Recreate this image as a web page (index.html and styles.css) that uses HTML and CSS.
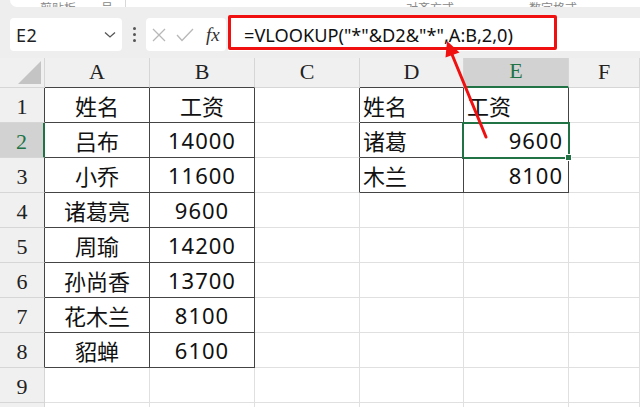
FILE: index.html
```html
<!DOCTYPE html>
<html lang="zh">
<head>
<meta charset="utf-8">
<link rel="stylesheet" href="styles.css">
</head>
<body>
<div class="page">
  <div class="ribbon">
    <span class="rt rt1">剪贴板</span>
    <span class="rt rt2">号</span>
    <span class="rdiv"></span>
    <span class="rt rt3">对齐方式</span>
    <span class="rt rt4">数字格式</span>
  </div>
  <div class="fbar">
    <div class="namebox">
      <span class="ref">E2</span>
      <svg class="chev" width="12" height="8" viewBox="0 0 12 8"><path d="M1 1.5 L6 6 L11 1.5" fill="none" stroke="#555" stroke-width="1.3"/></svg>
    </div>
    <div class="dots"><i></i><i></i><i></i></div>
    <div class="fbtns">
      <svg width="14" height="14" viewBox="0 0 14 14"><path d="M1 1 L13 13 M13 1 L1 13" stroke="#b8b8b8" stroke-width="1.3" fill="none"/></svg>
      <svg width="18" height="14" viewBox="0 0 18 14"><path d="M1 7 L6 12.5 L17 1" stroke="#b8b8b8" stroke-width="1.3" fill="none"/></svg>
      <span class="fx">fx</span>
    </div>
    <div class="finput">=VLOOKUP("*"&amp;D2&amp;"*",A:B,2,0)</div>
  </div>
  <div class="grid">
    <div class="c hd corner"><span class="tri"></span></div>
    <div class="c hd ch dkb">A</div>
    <div class="c hd ch dkb">B</div>
    <div class="c hd ch">C</div>
    <div class="c hd ch dkb">D</div>
    <div class="c hd ch act">E</div>
    <div class="c hd ch">F</div>

    <div class="c hd rh dkr">1</div>
    <div class="c t ctr">姓名</div>
    <div class="c t ctr">工资</div>
    <div class="c dkr"></div>
    <div class="c t lft">姓名</div>
    <div class="c t lft">工资</div>
    <div class="c"></div>

    <div class="c hd rh actr">2</div>
    <div class="c t ctr">吕布</div>
    <div class="c t ctr num">14000</div>
    <div class="c dkr"></div>
    <div class="c t lft">诸葛</div>
    <div class="c t rgt num sel">9600<span class="handle"></span></div>
    <div class="c"></div>

    <div class="c hd rh dkr">3</div>
    <div class="c t ctr">小乔</div>
    <div class="c t ctr num">11600</div>
    <div class="c dkr"></div>
    <div class="c t lft">木兰</div>
    <div class="c t rgt num">8100</div>
    <div class="c"></div>

    <div class="c hd rh dkr">4</div>
    <div class="c t ctr">诸葛亮</div>
    <div class="c t ctr num">9600</div>
    <div class="c"></div>
    <div class="c"></div>
    <div class="c"></div>
    <div class="c"></div>

    <div class="c hd rh dkr">5</div>
    <div class="c t ctr">周瑜</div>
    <div class="c t ctr num">14200</div>
    <div class="c"></div>
    <div class="c"></div>
    <div class="c"></div>
    <div class="c"></div>

    <div class="c hd rh dkr">6</div>
    <div class="c t ctr">孙尚香</div>
    <div class="c t ctr num">13700</div>
    <div class="c"></div>
    <div class="c"></div>
    <div class="c"></div>
    <div class="c"></div>

    <div class="c hd rh dkr">7</div>
    <div class="c t ctr">花木兰</div>
    <div class="c t ctr num">8100</div>
    <div class="c"></div>
    <div class="c"></div>
    <div class="c"></div>
    <div class="c"></div>

    <div class="c hd rh dkr">8</div>
    <div class="c t ctr">貂蝉</div>
    <div class="c t ctr num">6100</div>
    <div class="c"></div>
    <div class="c"></div>
    <div class="c"></div>
    <div class="c"></div>

    <div class="c hd rh">9</div>
    <div class="c"></div>
    <div class="c"></div>
    <div class="c"></div>
    <div class="c"></div>
    <div class="c"></div>
    <div class="c"></div>

    <div class="c hd rh">10</div>
    <div class="c"></div>
    <div class="c"></div>
    <div class="c"></div>
    <div class="c"></div>
    <div class="c"></div>
    <div class="c"></div>
  </div>

  <div class="redbox"></div>
  <svg class="arrow" width="640" height="407" viewBox="0 0 640 407">
    <line x1="486" y1="137" x2="451" y2="52" stroke="#f01010" stroke-width="3" stroke-linecap="round"/>
    <polygon points="447,41 459.5,52.5 445.5,57.5" fill="#f01010"/>
  </svg>
</div>
</body>
</html>
```
FILE: styles.css
```css
html, body {
  margin: 0;
  padding: 0;
}
body {
  background: #eeeeee;
  width: 640px;
  height: 407px;
  overflow: hidden;
  font-family: "Noto Sans", "Noto Sans CJK SC", sans-serif;
}
.page {
  position: relative;
  width: 640px;
  height: 407px;
  overflow: hidden;
}
.ribbon {
  height: 7px;
  margin-left: 10px;
  background: #ffffff;
  border-bottom-left-radius: 7px;
  overflow: hidden;
  display: flex;
  align-items: flex-end;
  font-size: 12px;
  color: #888;
  line-height: 12px;
}
.rt {
  display: block;
  margin-bottom: -8px;
}
.rt1 { margin-left: 30px; }
.rt2 { margin-left: 25px; }
.rdiv {
  width: 1px;
  height: 7px;
  background: #d8d8d8;
  margin-left: 12px;
}
.rt3 { margin-left: 280px; }
.rt4 { margin-left: 75px; }

.fbar {
  display: flex;
  align-items: stretch;
  height: 33px;
  margin-top: 11px;
  margin-left: 10px;
}
.namebox {
  width: 112px;
  background: #ffffff;
  border-radius: 4px;
  display: flex;
  align-items: center;
  justify-content: space-between;
  padding: 0 6px 0 6px;
  box-sizing: border-box;
}
.ref {
  font-size: 18px;
  color: #222;
  letter-spacing: 0.5px;
}
.chev {
  margin-top: 1px;
}
.dots {
  width: 24px;
  display: flex;
  flex-direction: column;
  align-items: center;
  justify-content: center;
  gap: 3px;
}
.dots i {
  display: block;
  width: 3px;
  height: 3px;
  background: #555;
  border-radius: 50%;
}
.fbtns {
  width: 80px;
  background: #ffffff;
  border-radius: 4px;
  display: flex;
  align-items: center;
  padding-left: 6px;
  box-sizing: border-box;
  gap: 10px;
}
.fx {
  font-family: "Liberation Serif", serif;
  font-style: italic;
  font-size: 19px;
  color: #333;
  margin-left: 2px;
}
.finput {
  flex: 1;
  margin-left: 2px;
  background: #ffffff;
  display: flex;
  align-items: center;
  padding-left: 16px;
  font-size: 18.2px;
  color: #111;
  white-space: nowrap;
}

.grid {
  margin-top: 7px;
  display: grid;
  grid-template-columns: 45px 105px 105px 105px 104px 105px 71px;
  grid-template-rows: 30px repeat(10, 35px);
  background: #ffffff;
}
.c {
  box-sizing: border-box;
  border-right: 1px solid #e0e0e0;
  border-bottom: 1px solid #e0e0e0;
  display: flex;
  align-items: center;
  font-size: 22px;
  color: #111;
  position: relative;
  white-space: nowrap;
}
.hd {
  background: #f0f0f0;
  border-right-color: #d6d6d6;
  border-bottom-color: #d6d6d6;
  font-family: "Liberation Serif", serif;
  color: #222;
  justify-content: center;
}
.ch {
  font-size: 22px;
  align-items: flex-end;
  padding-bottom: 2px;
}
.rh {
  font-size: 22px;
  align-items: flex-end;
  padding-bottom: 2px;
}
.corner {
  align-items: flex-end;
  justify-content: flex-end;
  padding: 0 3px 3px 0;
}
.tri {
  display: block;
  width: 23px;
  height: 23px;
  background: #c4c4c4;
  clip-path: polygon(100% 0, 100% 100%, 0 100%);
}
.dkb {
  border-bottom-color: #444;
}
.dkr {
  border-right-color: #444;
}
.act {
  background: #d2d2d2;
  color: #217346;
  border-bottom: 2px solid #217346;
}
.actr {
  background: #d2d2d2;
  color: #217346;
  border-right: 2px solid #217346;
}
.t {
  border-right-color: #444;
  border-bottom-color: #444;
}
.ctr {
  justify-content: center;
}
.lft {
  justify-content: flex-start;
  padding-left: 3px;
}
.rgt {
  justify-content: flex-end;
  padding-right: 5px;
}
.num {
  letter-spacing: 1px;
}
.sel::after {
  content: "";
  position: absolute;
  left: -2px;
  top: -1px;
  right: -2px;
  bottom: -2px;
  border: 2px solid #217346;
  pointer-events: none;
}
.handle {
  position: absolute;
  right: -4px;
  bottom: -4px;
  width: 5px;
  height: 5px;
  background: #217346;
  border: 1px solid #ffffff;
  z-index: 2;
}

.redbox {
  position: absolute;
  left: 228px;
  top: 15px;
  width: 329px;
  height: 35px;
  box-sizing: border-box;
  border: 3px solid #f01010;
  border-radius: 2px;
}
.arrow {
  position: absolute;
  left: 0;
  top: 0;
}
```
